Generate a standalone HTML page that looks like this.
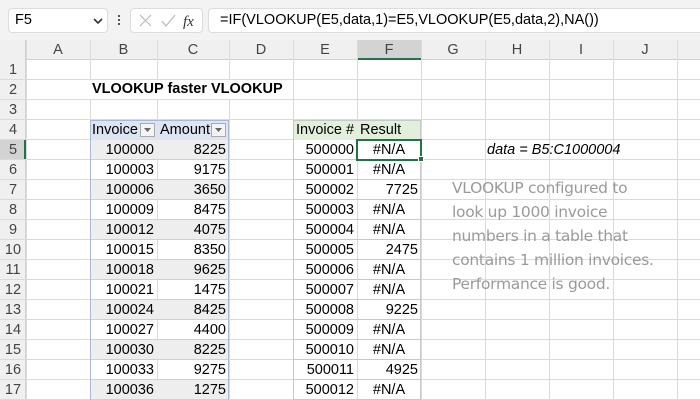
<!DOCTYPE html>
<html><head><style>
*{margin:0;padding:0;box-sizing:border-box}
body{width:700px;height:400px;overflow:hidden;background:#fff;font-family:"Liberation Sans",Calibri,sans-serif;font-size:14.5px;color:#000;position:relative}
.bar{position:absolute;left:0;top:0;width:700px;height:40px;background:#f3f3f3}
.box{position:absolute;background:#fff;border:1px solid #dcdcdc;border-radius:4px}
.c{position:absolute;height:20px;line-height:20px;white-space:nowrap}
.vl{position:absolute;top:40px;width:1px;height:360px;background:#dadada}
.hl{position:absolute;left:0;height:1px;width:700px;background:#dadada}
.hdr{position:absolute;background:#f0f0f0}
</style></head><body>
<div class="bar"></div>
<div class="box" style="left:8px;top:8px;width:100px;height:25px"></div>
<div class="c" style="left:15px;top:10px">F5</div>
<svg style="position:absolute;left:93px;top:17px" width="10" height="8"><path d="M1 2l4 4 4-4" stroke="#333" stroke-width="1.6" fill="none"/></svg>
<div style="position:absolute;left:118px;top:15px;width:2px;height:2px;background:#555;box-shadow:0 4px #555,0 8px #555"></div>
<div class="box" style="left:130px;top:8px;width:73px;height:25px"></div>
<svg style="position:absolute;left:137px;top:13px" width="60" height="16"><path d="M3 2l11 11M14 2L3 13" stroke="#bbb" stroke-width="1.2"/><path d="M25 8l4 5 9-11" stroke="#bbb" stroke-width="1.2" fill="none"/><text x="46" y="13" font-family="Liberation Serif" font-style="italic" font-size="15" fill="#333">fx</text></svg>
<div class="box" style="left:208px;top:8px;width:500px;height:25px"></div>
<div class="c" style="left:220px;top:10px;font-size:14.5px">=IF(VLOOKUP(E5,data,1)=E5,VLOOKUP(E5,data,2),NA())</div>

<div class="hdr" style="left:0;top:40px;width:700px;height:20px;border-bottom:1px solid #d0d0d0"></div>
<div class="hdr" style="left:0;top:40px;width:26px;height:360px;border-right:1px solid #d0d0d0"></div>
<div style="position:absolute;left:357px;top:40px;width:64px;height:20px;background:#d3d3d3;border-bottom:2px solid #217346"></div>
<div style="position:absolute;left:0;top:140px;width:26px;height:20px;background:#d3d3d3;border-right:2px solid #217346"></div>
<div id="g"></div>

<div style="position:absolute;left:90px;top:120px;width:139px;height:280px;border:1px solid #a9b8d6;border-bottom:none"></div>
<div style="position:absolute;left:91px;top:121px;width:137px;height:19px;background:#dde4f2"></div>
<div style="position:absolute;left:293px;top:120px;width:128px;height:280px;border:1px solid #c8c8c8;border-bottom:none"></div>
<div style="position:absolute;left:294px;top:121px;width:126px;height:19px;background:#e2efda"></div>
<div id="t"></div>

<div class="c" style="left:90px;top:80px;padding-left:2px;width:200px;height:19px;line-height:19px;background:#fff;font-weight:bold">VLOOKUP faster VLOOKUP</div>
<div class="c" style="left:487px;top:140px;font-style:italic">data = B5:C1000004</div>
<div style="position:absolute;left:452px;top:176px;width:250px;font-family:'DejaVu Sans',sans-serif;font-size:15.5px;line-height:24px;color:#9a9a9a;letter-spacing:-0.3px">VLOOKUP configured to<br>look up 1000 invoice<br>numbers in a table that<br>contains 1 million invoices.<br>Performance is good.</div>
<div style="position:absolute;left:356px;top:139px;width:66px;height:22px;border:2px solid #217346"></div>
<div style="position:absolute;left:418px;top:156px;width:6px;height:6px;background:#217346;border:1px solid #fff"></div>
<script>
var cols=[26,90,157,229,293,357,421,485,549,613,677,741],L="ABCDEFGHIJK",h="";
for(var i=0;i<cols.length;i++){h+='<div class="vl" style="left:'+cols[i]+'px"></div>';if(i<11)h+='<div class="c" style="left:'+cols[i]+'px;top:40px;width:'+(cols[i+1]-cols[i])+'px;text-align:center;color:#444">'+L[i]+'</div>';}
for(var r=1;r<=17;r++){var y=40+r*20;h+='<div class="hl" style="top:'+(y+19)+'px"></div><div class="c" style="left:0;top:'+y+'px;width:26px;text-align:center;color:#444">'+r+'</div>';}
document.getElementById('g').innerHTML=h;
var B=[100000,100003,100006,100009,100012,100015,100018,100021,100024,100027,100030,100033,100036],C=[8225,9175,3650,8475,4075,8350,9625,1475,8425,4400,8225,9275,1275],F=["#N/A","#N/A",7725,"#N/A","#N/A",2475,"#N/A","#N/A",9225,"#N/A","#N/A",4925,"#N/A"],t="";
t+='<div class="c" style="left:92px;top:120px">Invoice</div><div class="c" style="left:160px;top:120px">Amount</div>';
t+='<div style="position:absolute;left:140px;top:123px;width:15px;height:14px;border:1px solid #aaa;background:#f4f4f4"></div><div style="position:absolute;left:211px;top:123px;width:15px;height:14px;border:1px solid #aaa;background:#f4f4f4"></div>';
t+='<svg style="position:absolute;left:144px;top:128px" width="8" height="5"><path d="M0 0h7L3.5 4z" fill="#666"/></svg><svg style="position:absolute;left:215px;top:128px" width="8" height="5"><path d="M0 0h7L3.5 4z" fill="#666"/></svg>';
t+='<div class="c" style="left:296px;top:120px">Invoice #</div><div class="c" style="left:360px;top:120px">Result</div>';
for(var k=0;k<13;k++){var y=140+k*20;
if(k%2==0)t+='<div style="position:absolute;left:91px;top:'+y+'px;width:137px;height:19px;background:#eeeeee"></div>';
t+='<div style="position:absolute;left:91px;top:'+(y+19)+'px;width:137px;height:1px;background:#d0d0d0"></div>';
t+='<div style="position:absolute;left:294px;top:'+(y+19)+'px;width:126px;height:1px;background:#c8c8c8"></div>';
t+='<div class="c" style="left:90px;top:'+y+'px;width:64px;text-align:right">'+B[k]+'</div>';
t+='<div class="c" style="left:157px;top:'+y+'px;width:69px;text-align:right">'+C[k]+'</div>';
t+='<div class="c" style="left:293px;top:'+y+'px;width:61px;text-align:right">'+(500000+k)+'</div>';
var f=F[k];t+='<div class="c" style="left:357px;top:'+y+'px;width:'+(typeof f=="string"?64:61)+'px;text-align:'+(typeof f=="string"?'center':'right')+'">'+f+'</div>';}
document.getElementById('t').innerHTML=t;
</script>
</body></html>
